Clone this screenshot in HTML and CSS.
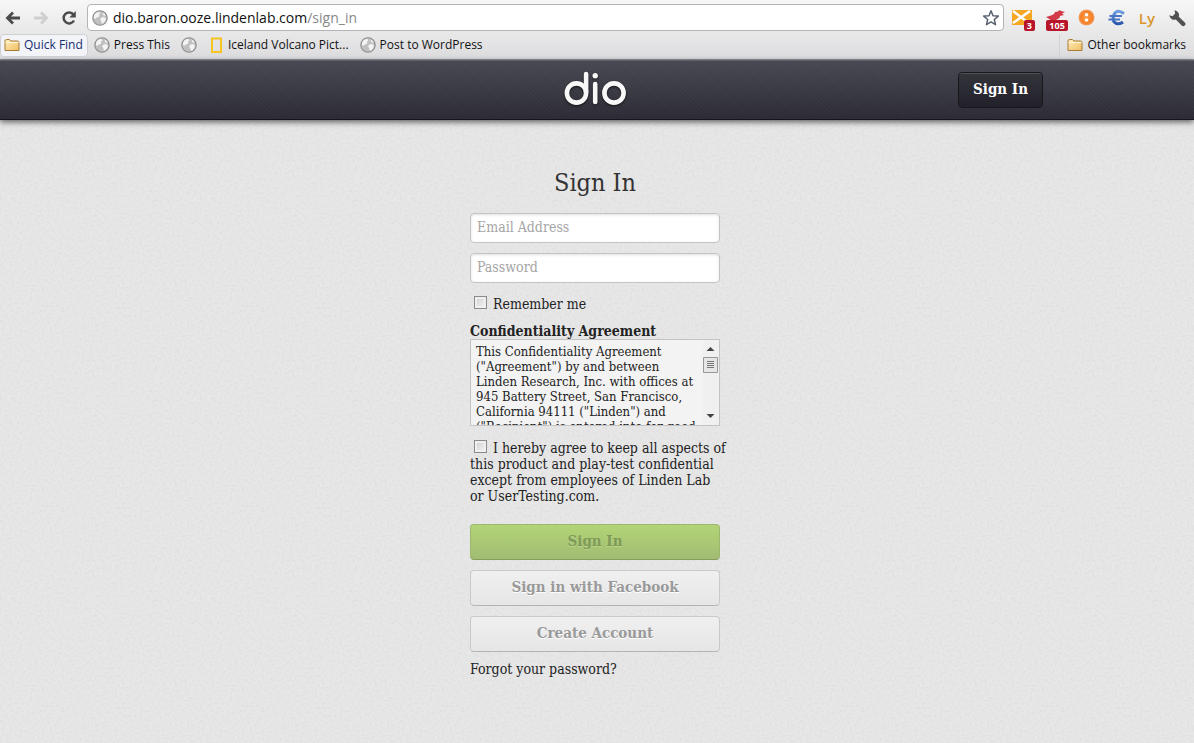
FILE: index.html
```html
<!DOCTYPE html>
<html lang="en">
<head>
<meta charset="utf-8">
<title>Sign In - dio</title>
<link rel="stylesheet" href="styles.css">
</head>
<body>
<svg class="defs" aria-hidden="true">
  <defs>
    <linearGradient id="folderFill" x1="0" y1="0" x2="1" y2="1"><stop offset="0" stop-color="#fff0bd"/><stop offset="1" stop-color="#f0bd62"/></linearGradient>
    <radialGradient id="orangeFill"><stop offset="0" stop-color="#ff9a3c"/><stop offset=".75" stop-color="#f4802a"/><stop offset="1" stop-color="#f0a56c"/></radialGradient>
    <linearGradient id="euroFill" x1="0" y1="0" x2="0" y2="1"><stop offset="0" stop-color="#6f9fe0"/><stop offset="1" stop-color="#2a57ad"/></linearGradient>
    <symbol id="globe" viewBox="0 0 16 16">
      <circle cx="8" cy="8" r="7.2" fill="#c0c0c0" stroke="#8d8d8d" stroke-width="1.1"/>
      <path d="M2.500 4.500 4.500 2.500 7.500 1.900 8.500 3.200 6.800 4.500 7.500 6 6 7.200 4.500 7.500 3.500 9 1.800 8zM9.500 7.500 12 7 14 8.500 13.200 11 11 13.800 9.500 13 9.300 11 8 9.500zM10.500 2.600 12.800 4 13.600 5.800 11.500 5.500z" fill="#f4f4f4"/>
    </symbol>
    <symbol id="folder" viewBox="0 0 16 14">
      <path d="M1 12.500V3Q1 1.500 2.500 1.500H5.500L7 3H13.500Q15 3 15 4.500V12.500Z" fill="url(#folderFill)" stroke="#a87a35"/>
      <path d="M1.500 4.500H14.500" stroke="#fff6d8"/>
    </symbol>
  </defs>
</svg>

<header class="browser">
  <div class="toolbar">
    <div class="nav">
      <button class="tool" aria-label="Back"><svg width="16" height="14" viewBox="0 0 16 14"><path d="M8 1.500 2.500 7 8 12.500M3 7H15" fill="none" stroke="#4b4b4b" stroke-width="2.800"/></svg></button>
      <button class="tool" aria-label="Forward"><svg width="16" height="14" viewBox="0 0 16 14"><path d="M8 1.500 13.500 7 8 12.500M13 7H1" fill="none" stroke="#cfcfcf" stroke-width="2.800"/></svg></button>
      <button class="tool" aria-label="Reload"><svg width="16" height="16" viewBox="0 0 16 16"><path d="M12.500 4.500A5.500 5.500 0 1 0 13 10.500" fill="none" stroke="#4b4b4b" stroke-width="2.500"/><path d="M14.800 1V7.500H8.300Z" fill="#4b4b4b"/></svg></button>
    </div>
    <div class="omnibox">
      <svg width="16" height="16"><use href="#globe"/></svg>
      <span class="url">dio.baron.ooze.lindenlab.com<span class="path">/sign_in</span></span>
      <button class="tool" aria-label="Bookmark this page"><svg width="18" height="18" viewBox="0 0 18 18"><path d="M9 1.800 11 6.700 16.300 7.100 12.300 10.500 13.500 15.700 9 12.900 4.500 15.700 5.700 10.500 1.700 7.100 7 6.700Z" fill="#fff" stroke="#59616f" stroke-width="1.500" stroke-linejoin="round"/></svg></button>
    </div>
    <div class="extensions">
      <button class="tool ext" aria-label="Mail"><svg width="20" height="15" viewBox="0 0 20 15"><path d="M0 0H20V15H0Z" fill="#f5a623"/><path d="M1 1 18 14M18 1 1 13" stroke="#fff" stroke-width="2.500"/></svg><span class="badge">3</span></button>
      <button class="tool ext" aria-label="Feed"><svg width="20" height="15" viewBox="0 0 20 15"><path d="M1 7 6 5.500 9 4 10 2 13 1.500 14.500 0 16 1 20 2 17 3.500 19 5 15 6 14.500 8 11 10 4 12 5 9.500Z" fill="#d23a48"/></svg><span class="badge">105</span></button>
      <button class="tool ext" aria-label="Shortener"><svg width="17" height="17" viewBox="0 0 17 17"><circle cx="8.500" cy="8.500" r="8" fill="url(#orangeFill)"/><circle cx="8.500" cy="5.700" r="1.800" fill="#fff"/><circle cx="8.500" cy="11" r="1.800" fill="#fff"/></svg></button>
      <button class="tool ext" aria-label="Currency"><svg width="18" height="17" viewBox="0 0 18 17"><path d="M16 4.500Q9-.5 6 5.500 3.500 12.500 8.500 14.500 12 15.500 15 13" fill="none" stroke="url(#euroFill)" stroke-width="3"/><path d="M1.500 7H14M.5 10.500H12" stroke="#4777c5" stroke-width="1.800"/></svg></button>
      <button class="tool ext ly">Ly</button>
      <button class="tool ext" aria-label="Settings"><svg width="18" height="18" viewBox="0 0 18 18"><path d="M6.500 1.300A5 5 0 0 1 10.800 7.800L16.800 13.500A2.100 2.100 0 0 1 13.700 16.500L7.800 10.600A5 5 0 0 1 1.300 6.300L4.500 7.200 7.200 4.500Z" fill="#505050"/></svg></button>
    </div>
  </div>
  <nav class="bookmarks">
    <a class="bookmark quick" href="#"><svg width="16" height="14"><use href="#folder"/></svg>Quick Find</a>
    <a class="bookmark" href="#"><svg width="16" height="16"><use href="#globe"/></svg>Press This</a>
    <a class="bookmark" href="#" aria-label="Untitled"><svg width="16" height="16"><use href="#globe"/></svg></a>
    <a class="bookmark" href="#"><svg width="16" height="16" viewBox="0 0 16 16"><path d="M4 1.500H13V15H4Z" fill="none" stroke="#f7c520" stroke-width="2"/></svg>Iceland Volcano Pict...</a>
    <a class="bookmark" href="#"><svg width="16" height="16"><use href="#globe"/></svg>Post to WordPress</a>
    <a class="bookmark other" href="#"><svg width="16" height="14"><use href="#folder"/></svg>Other bookmarks</a>
  </nav>
</header>

<div class="masthead">
  <div class="masthead-inner">
    <a class="logo" href="#" aria-label="dio"><svg width="64" height="38" viewBox="0 0 64 38"><g fill="none" stroke="#f8f8f8" stroke-width="4.600" stroke-linecap="round"><circle cx="13.500" cy="22" r="9.600"/><path d="M23.100 3V21M32.200 13V31"/><circle cx="51" cy="22" r="9.600"/></g><circle cx="32.200" cy="4.800" r="2.700" fill="#f8f8f8"/></svg></a>
    <button class="header-button">Sign In</button>
  </div>
</div>

<main class="page">
  <form class="signin">
    <h1>Sign In</h1>
    <input class="field" type="email" placeholder="Email Address" aria-label="Email Address">
    <input class="field" type="password" placeholder="Password" aria-label="Password">
    <label class="check"><input type="checkbox">Remember me</label>
    <label class="terms-title" for="terms">Confidentiality Agreement</label>
    <div class="terms">
      <textarea id="terms" readonly rows="6" wrap="off">This Confidentiality Agreement
("Agreement") by and between
Linden Research, Inc. with offices at
945 Battery Street, San Francisco,
California 94111 ("Linden") and
("Recipient") is entered into for good</textarea>
      <div class="scrollbar" aria-hidden="true">
        <svg width="15" height="16" viewBox="0 0 15 16"><path d="M3.500 10 7.500 6 11.500 10Z" fill="#444"/></svg>
        <svg width="15" height="16" viewBox="0 0 15 16"><path d="M.5.500H14.500V15.500H.5Z" fill="#e6e6e6" stroke="#999"/><path d="M4 4.500H11M4 6.500H11M4 8.500H11M4 10.500H11" stroke="#777"/></svg>
        <svg class="down" width="15" height="16" viewBox="0 0 15 16"><path d="M3.500 6 7.500 10 11.500 6Z" fill="#444"/></svg>
      </div>
    </div>
    <label class="agree"><input type="checkbox">I hereby agree to keep all aspects of<br>this product and play-test confidential<br>except from employees of Linden Lab<br>or UserTesting.com.</label>
    <div class="actions">
      <button class="button primary" type="submit" disabled>Sign In</button>
      <button class="button" type="button" disabled>Sign in with Facebook</button>
      <button class="button" type="button" disabled>Create Account</button>
    </div>
    <a class="forgot" href="#">Forgot your password?</a>
  </form>
</main>
</body>
</html>
```
FILE: styles.css
```css
* { box-sizing: border-box; }
body {
  margin: 0;
  min-height: 100vh;
  color: #222;
  font-family: "DejaVu Serif Condensed", "DejaVu Serif", serif;
  font-size: 14px;
  line-height: 16px;
  background: #e7e7e7 url("data:image/svg+xml,%3Csvg xmlns='http://www.w3.org/2000/svg' width='200' height='200'%3E%3Cfilter id='n'%3E%3CfeTurbulence type='fractalNoise' baseFrequency='.4' numOctaves='3' stitchTiles='stitch'/%3E%3CfeColorMatrix values='0 0 0 0 .5 0 0 0 0 .5 0 0 0 0 .5 .4 0 0 0 -.16'/%3E%3C/filter%3E%3Crect width='200' height='200' filter='url(%23n)'/%3E%3C/svg%3E");
}
button, input, textarea { font: inherit; color: inherit; }
a { color: inherit; text-decoration: none; }
svg { display: block; flex: none; }
.defs { position: absolute; width: 0; height: 0; }

.browser {
  font-family: "Open Sans", sans-serif;
  font-size: 12px;
  color: #111;
  padding-top: 4px;
  background: linear-gradient(#f7f7f7, #dcdcde);
  border-bottom: 1px solid #8b8e96;
}
.toolbar { display: flex; align-items: center; gap: 8px; padding: 0 8px 0 5px; }
.tool { display: flex; padding: 0; border: 0; background: none; }
.nav { display: flex; align-items: center; gap: 12px; width: 74px; }
.omnibox {
  flex: 1;
  display: flex;
  align-items: center;
  gap: 5px;
  height: 27px;
  padding: 0 3px 0 4px;
  background: #fff;
  border: 1px solid #b4b4b4;
  border-radius: 4px;
}
.url { flex: 1; font-size: 14px; }
.path { color: #888; }
.extensions { display: flex; align-items: center; gap: 13px; }
.ext { position: relative; }
.badge {
  position: absolute;
  right: -3px;
  bottom: -6px;
  padding: 0 3px;
  border-radius: 2px;
  background: #b8152b;
  color: #fff;
  font: bold 9px/11px "Open Sans", sans-serif;
}
.ly { color: #d9982f; font-size: 15px; font-weight: 600; line-height: 18px; }
.bookmarks { display: flex; align-items: center; height: 28px; gap: 11px; padding: 0 8px 0 0; }
.bookmark { display: flex; align-items: center; gap: 4px; height: 23px; white-space: nowrap; }
.quick {
  padding: 0 4px 0 3px;
  margin-right: -5px;
  color: #172f70;
  background: #f3f4f8;
  border: 1px solid #d0d0d4;
  border-radius: 4px;
}
.other { margin-left: auto; padding-left: 7px; border-left: 1px solid #d2d2d4; }

.masthead {
  padding-right: 4px;
  background:
    repeating-linear-gradient(45deg, rgba(255,255,255,.02) 0 1px, transparent 1px 3px),
    linear-gradient(#484852, #2c2b35);
  border-top: 1px solid #62626c;
  border-bottom: 1px solid #16161a;
  box-shadow: 0 2px 6px rgba(0,0,0,.6);
}
.masthead-inner {
  display: grid;
  grid-template-columns: 1fr auto 1fr;
  align-items: center;
  max-width: 896px;
  height: 58px;
  margin: 0 auto;
}
.logo { grid-column: 2; filter: drop-shadow(0 1px 1px #111); }
.header-button {
  justify-self: end;
  width: 85px;
  height: 36px;
  padding: 0 0 3px;
  color: #fff;
  font-weight: bold;
  font-size: 15px;
  white-space: nowrap;
  background: linear-gradient(#34343d, #22212a);
  border: 1px solid #17171c;
  border-radius: 4px;
  box-shadow: inset 0 1px #50505a;
}

.page { padding: 45px 4px 24px 0; }
.signin { display: flex; flex-direction: column; width: 250px; margin: 0 auto; }
h1 { margin: 0 0 12px; text-align: center; font-size: 25px; line-height: 36px; font-weight: normal; color: #333; }
.field {
  height: 30px;
  margin: 0 0 10px;
  padding: 0 6px 2px;
  background: #fff;
  border: 1px solid #c4c4c4;
  border-radius: 4px;
  box-shadow: inset 0 1px 3px rgba(0,0,0,.12);
}
.field::placeholder { color: #a5a5a5; opacity: 1; }
input[type="checkbox"] {
  appearance: none;
  width: 13px;
  height: 13px;
  margin: 0 6px 0 4px;
  background: linear-gradient(135deg, #ccc, #f8f8f8);
  border: 1px solid #8b8b8b;
  box-shadow: inset 0 0 0 2px #f0f0f0;
}
.check { display: block; padding-top: 3px; white-space: nowrap; }
.terms-title { margin-top: 11px; font-weight: bold; white-space: nowrap; }
.terms { display: flex; height: 87px; background: #f3f3f3; border: 1px solid #c3c3c3; }
.terms textarea {
  flex: 1;
  min-width: 0;
  padding: 4px 0 0 5px;
  border: 0;
  resize: none;
  overflow: hidden;
  background: none;
  font-size: 13px;
  line-height: 15px;
}
.scrollbar { display: flex; flex-direction: column; width: 16px; padding: 1px 0; background: #f0f0f0; }
.down { margin-top: auto; }
.agree { margin-top: 14px; white-space: nowrap; }
.actions { display: flex; flex-direction: column; gap: 10px; margin-top: 20px; }
.button {
  height: 36px;
  padding: 0 0 2px;
  color: #999;
  font-size: 15px;
  font-weight: bold;
  text-shadow: 0 1px #fff;
  background: linear-gradient(#f0f0f0, #e6e6e6);
  border: 1px solid #c9c9c9;
  border-bottom-color: #b4b4b4;
  border-radius: 4px;
}
.primary {
  color: #7f9a58;
  text-shadow: 0 1px #b9d48b;
  background: linear-gradient(#b2d475, #a1bc73);
  border-color: #9db76e;
  border-bottom-color: #869d5e;
}
.forgot { margin-top: 9px; align-self: flex-start; }
```
